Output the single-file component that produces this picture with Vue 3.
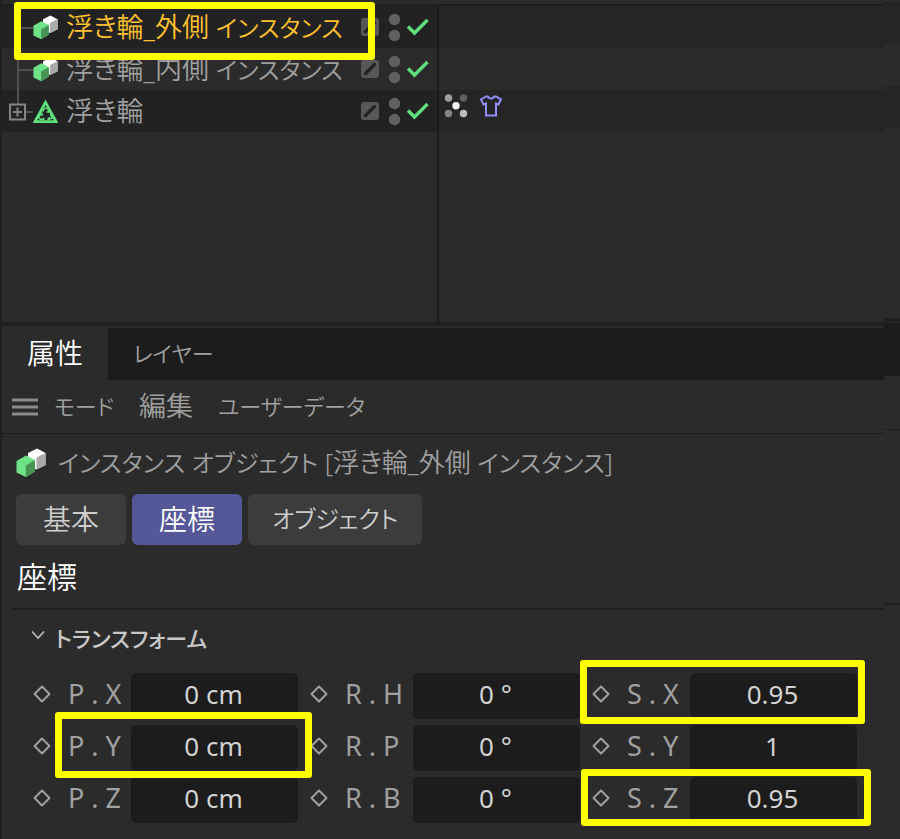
<script setup>
import { ref } from 'vue'

const objects = ref([
  { name: '浮き輪_外側 インスタンス', kind: 'instance', selected: true, tags: false },
  { name: '浮き輪_内側 インスタンス', kind: 'instance', selected: false, tags: false },
  { name: '浮き輪', kind: 'volume', selected: false, tags: true },
])

const title = 'インスタンス オブジェクト [浮き輪_外側 インスタンス]'
const panels = ['属性', 'レイヤー']
const menus = ['モード', '編集', 'ユーザーデータ']
const pages = ref(['基本', '座標', 'オブジェクト'])
const page = ref('座標')

const fields = ref([
  { id: 'px', label: 'P . X', value: '0 cm' },
  { id: 'rh', label: 'R . H', value: '0 °' },
  { id: 'sx', label: 'S . X', value: '0.95', mark: 'mark-sx' },
  { id: 'py', label: 'P . Y', value: '0 cm', mark: 'mark-py' },
  { id: 'rp', label: 'R . P', value: '0 °' },
  { id: 'sy', label: 'S . Y', value: '1' },
  { id: 'pz', label: 'P . Z', value: '0 cm' },
  { id: 'rb', label: 'R . B', value: '0 °' },
  { id: 'sz', label: 'S . Z', value: '0.95', mark: 'mark-sz' },
])

// Katakana is set smaller than kanji, so each text is split into runs.
const isKana = (text) => /^[\u30a0-\u30ff]/.test(text)
const runs = (text) =>
  text.split(/([\u30a0-\u30ff]+)/).filter(Boolean).map((t) => ({ t, kana: isKana(t) }))
</script>

<template>
  <svg class="defs" aria-hidden="true">
    <symbol id="cubes" viewBox="0 0 30 30">
      <path d="M12 5 21 0.500 29.500 5 29.500 17 20.500 21.500 12 17z" fill="#fff" />
      <path d="M20.500 9.500 29.500 5 29.500 17 20.500 21.500z" fill="#a9a9a9" />
      <path d="M0.500 13 10 7.500 19 12 19 23.500 9.800 29 0.500 24.500z" fill="#6de286" />
      <path d="M9.800 17.500 19 12 19 23.500 9.800 29z" fill="#489456" />
    </symbol>
  </svg>
  <div class="window">
    <main class="content">
      <section class="manager">
        <ul class="tree">
          <li v-for="(o, i) in objects" :key="o.name" class="row" :class="{ selected: o.selected }">
            <span class="branch">
              <svg viewBox="0 0 34 42">
                <path v-if="i === 0" d="M16 22V42M16 22H31" />
                <path v-else-if="i === 1" d="M16 0V42M16 22H31" />
                <g v-else>
                  <path d="M16 0V14M24 22H31" />
                  <path class="expander" d="M8 14.500h15v15h-15zM11 22h9M15.500 17.500v9" />
                </g>
              </svg>
            </span>
            <svg v-if="o.kind === 'instance'" class="object-icon"><use href="#cubes" /></svg>
            <svg v-else class="object-icon" viewBox="0 0 26 26">
              <path d="M13 3.500 24 23.500H2z" fill="none" stroke="#5fe07c" stroke-width="2.800" />
              <path d="M10 13 12.300 9.500h2.400l2 3.500M17.500 10.500v3h-3.500M18 16l2 4-4 1.500M17.500 19l-2.500 2.200M12 21H7.500L6 19.500 8.500 15M6.500 15.500 9 14.500l1 3M11 19.500v3" fill="none" stroke="#5fe07c" stroke-width="1.500" />
            </svg>
            <span class="name"><span v-for="(r, n) in runs(o.name)" :key="n" :class="{ kana: r.kana }">{{ r.t }}</span></span>
            <span v-if="o.selected" class="mark mark-row"></span>
            <svg class="state" viewBox="0 0 70 32">
              <rect x="0" y="7" width="18" height="18" rx="3" fill="#575757" />
              <path d="M4.500 20.500 13.500 11.500" stroke="#242424" stroke-width="3.400" stroke-linecap="round" />
              <circle cx="33.500" cy="8.500" r="5.700" fill="#606060" />
              <circle cx="33.500" cy="24.500" r="5.700" fill="#606060" />
              <path d="M47 15.500 53.500 22 66.500 9" fill="none" stroke="#5fe07c" stroke-width="3.400" />
            </svg>
            <span class="tags">
              <svg v-if="o.tags" viewBox="0 0 60 26">
                <circle cx="4.500" cy="5" r="3.700" fill="#a0a0a0" />
                <circle cx="19.500" cy="5" r="3.700" fill="#606060" />
                <circle cx="12" cy="12.700" r="3.700" fill="#f2f2f2" />
                <circle cx="4.500" cy="20.500" r="3.700" fill="#858585" />
                <circle cx="19.500" cy="20.500" r="3.700" fill="#bdbdbd" />
                <path d="M42 3.500 37 6.500l2.500 5 2.500-1V22.500h10V10.500l2.500 1 2.500-5L52 3.500H50.500Q47 7.500 43.500 3.500z" fill="none" stroke="#918efb" stroke-width="2" />
              </svg>
            </span>
          </li>
        </ul>
        <div class="space"></div>
      </section>

      <nav class="panels">
        <button v-for="(p, i) in panels" :key="p" type="button" :class="{ active: i === 0, kana: isKana(p) }">{{ p }}</button>
      </nav>

      <nav class="menubar">
        <svg class="burger" viewBox="0 0 26 20"><path d="M0 4H26M0 11H26M0 18H26" stroke="#8b8b8b" stroke-width="3" /></svg>
        <button v-for="m in menus" :key="m" type="button" :class="{ kana: isKana(m) }">{{ m }}</button>
      </nav>

      <section class="attributes">
        <header class="title">
          <svg class="title-icon"><use href="#cubes" /></svg>
          <span><span v-for="(r, n) in runs(title)" :key="n" :class="{ kana: r.kana }">{{ r.t }}</span></span>
        </header>
        <div class="pages">
          <button v-for="p in pages" :key="p" type="button" :class="{ active: p === page, kana: isKana(p) }" @click="page = p">{{ p }}</button>
        </div>
        <h1>座標</h1>
        <h2>
          <svg class="chevron" viewBox="0 0 14 10"><path d="M1 1.500 7 8 13 1.500" fill="none" stroke="#c0c0c0" stroke-width="1.600" /></svg>
          トランスフォーム
        </h2>
        <div class="fields">
          <div v-for="f in fields" :key="f.id" class="field">
            <svg class="key" viewBox="0 0 18 18"><path d="M9 1.500 16.500 9 9 16.500 1.500 9z" fill="none" stroke="#a2a2a2" stroke-width="2" stroke-linejoin="round" /></svg>
            <label :for="f.id">{{ f.label }}</label>
            <input :id="f.id" v-model="f.value" type="text" />
            <span v-if="f.mark" class="mark" :class="f.mark"></span>
          </div>
        </div>
      </section>
    </main>
    <aside class="edge">
      <div class="edge-rows"><i></i><i></i><i></i></div>
      <div class="edge-tabs"></div>
      <div class="edge-menu"></div>
      <div class="edge-body"></div>
    </aside>
  </div>
</template>

<style>
body {
  margin: 0;
  background: #2b2b2b;
}
</style>

<style scoped>
* {
  box-sizing: border-box;
}
.defs {
  position: absolute;
  width: 0;
  height: 0;
}
.window {
  display: grid;
  grid-template-columns: minmax(0, 1fr) 16px;
  color: #a0a0a0;
  font-family: "Noto Sans", "Noto Sans CJK JP", sans-serif;
  font-size: 27px;
  font-weight: 350;
  line-height: 32px;
  font-feature-settings: "palt";
  overflow: hidden;
}
.content {
  border-left: 2px solid #202020;
}
button,
input {
  font: inherit;
  font-feature-settings: inherit;
  color: inherit;
  border: 0;
  padding: 0;
  background: none;
}
.kana {
  font-size: 24px;
}
.manager {
  padding-top: 4px;
  border-bottom: 4px solid #202020;
  background: #2b2b2b;
}
.tree {
  margin: 0;
  padding: 0;
  list-style: none;
  border-top: 2px solid #1e1e1e;
}
.row {
  position: relative;
  display: flex;
  align-items: center;
  height: 42px;
  background: #222;
}
.row:nth-child(even) {
  background: #2b2b2b;
}
.row.selected {
  color: #ffc02e;
}
.branch {
  width: 31px;
  height: 42px;
}
.branch svg {
  display: block;
  width: 34px;
  height: 42px;
  fill: none;
  stroke: #505050;
  stroke-width: 2;
}
.branch .expander {
  stroke: #858585;
}
.object-icon {
  width: 25px;
  height: 25px;
}
.name {
  flex: none;
  width: 294px;
  padding-left: 8px;
  white-space: nowrap;
}
.state {
  width: 70px;
  height: 32px;
  margin-left: 9px;
}
.tags {
  align-self: stretch;
  flex: 1;
  margin-left: 6px;
  padding: 3px 5px;
  border-left: 2px solid #1c1c1c;
  background: #252525;
}
.row:nth-child(even) .tags {
  background: #2b2b2b;
}
.tags svg {
  display: block;
  width: 60px;
  height: 26px;
}
.space {
  width: 437px;
  height: 190px;
  border-right: 2px solid #1c1c1c;
}
.panels {
  display: flex;
  height: 54px;
  border-top: 2px solid #2b2b2b;
  background: #1c1c1c;
}
.panels button {
  padding: 0 25px 2px;
  font-size: 28px;
}
.panels .active {
  background: #2b2b2b;
  color: #fff;
}
.panels .kana,
.menubar .kana {
  font-size: 22px;
}
.menubar {
  display: flex;
  align-items: center;
  gap: 25px;
  height: 54px;
  padding-left: 10px;
  padding-bottom: 2px;
  border-bottom: 1px solid #1c1c1c;
}
.burger {
  width: 26px;
  height: 20px;
  margin-right: -9px;
}
.attributes {
  padding: 12px 0 0 14px;
}
.title {
  display: flex;
  align-items: center;
  gap: 12px;
  font-size: 26px;
  white-space: nowrap;
}
.title-icon {
  width: 30px;
  height: 30px;
}
.pages {
  display: flex;
  gap: 6px;
  margin-top: 15px;
}
.pages button {
  height: 51px;
  padding: 0 27px 2px;
  border-radius: 6px;
  background: #3c3c3c;
  color: #cdcdcd;
  font-size: 28px;
}
.pages .kana {
  padding: 0 24px 2px;
  font-size: 24px;
}
.pages .active {
  background: #555898;
  color: #fff;
}
h1 {
  margin: 0 0 0 -4px;
  padding: 16px 5px 15px;
  border-bottom: 2px solid #202020;
  color: #fff;
  font-size: 30px;
  font-weight: 350;
  line-height: 32px;
}
h2 {
  display: flex;
  align-items: center;
  gap: 10px;
  margin: 10px 0 0 15px;
  color: #c8c8c8;
  font-size: 22px;
  font-weight: 500;
  line-height: 36px;
}
.chevron {
  width: 14px;
  height: 10px;
  margin-bottom: 6px;
}
.fields {
  display: grid;
  grid-template-columns: 277px 282px 277px;
  gap: 6px 0;
  padding: 17px 0 16px 17px;
  font-size: 26px;
  font-weight: 400;
}
.field {
  position: relative;
  display: flex;
  align-items: center;
  padding-right: 12px;
}
.key {
  flex: none;
  width: 18px;
  height: 18px;
  margin-bottom: 4px;
}
label {
  padding: 0 0 4px 17px;
  font-size: 27px;
  white-space: nowrap;
}
input {
  width: 167px;
  height: 46px;
  margin-left: auto;
  padding: 0 2px 4px 0;
  border-radius: 5px;
  background: #1c1c1c;
  color: #d2d2d2;
  text-align: center;
}
.mark {
  position: absolute;
  border: 7px solid #ff0;
  border-radius: 3px;
  pointer-events: none;
  z-index: 1;
}
.mark-row {
  left: 12px;
  top: -4px;
  width: 361px;
  height: 58px;
}
.mark-py {
  inset: -13px -2px -7px 22px;
}
.mark-sx {
  inset: -13px 4px -5px -12px;
}
.mark-sz {
  inset: -8px -2px -3px -11px;
}
.edge-rows {
  height: 322px;
  padding-top: 2px;
  border-bottom: 4px solid #202020;
}
.edge-rows i {
  display: block;
  height: 42px;
}
.edge-rows i:nth-child(odd) {
  background: #252525;
}
.edge-tabs {
  height: 54px;
  border-top: 1px solid #2b2b2b;
  background: #1c1c1c;
}
.edge-menu {
  height: 54px;
  border-bottom: 1px solid #1c1c1c;
}
.edge-body {
  height: 175px;
  border-bottom: 2px solid #202020;
}
</style>
